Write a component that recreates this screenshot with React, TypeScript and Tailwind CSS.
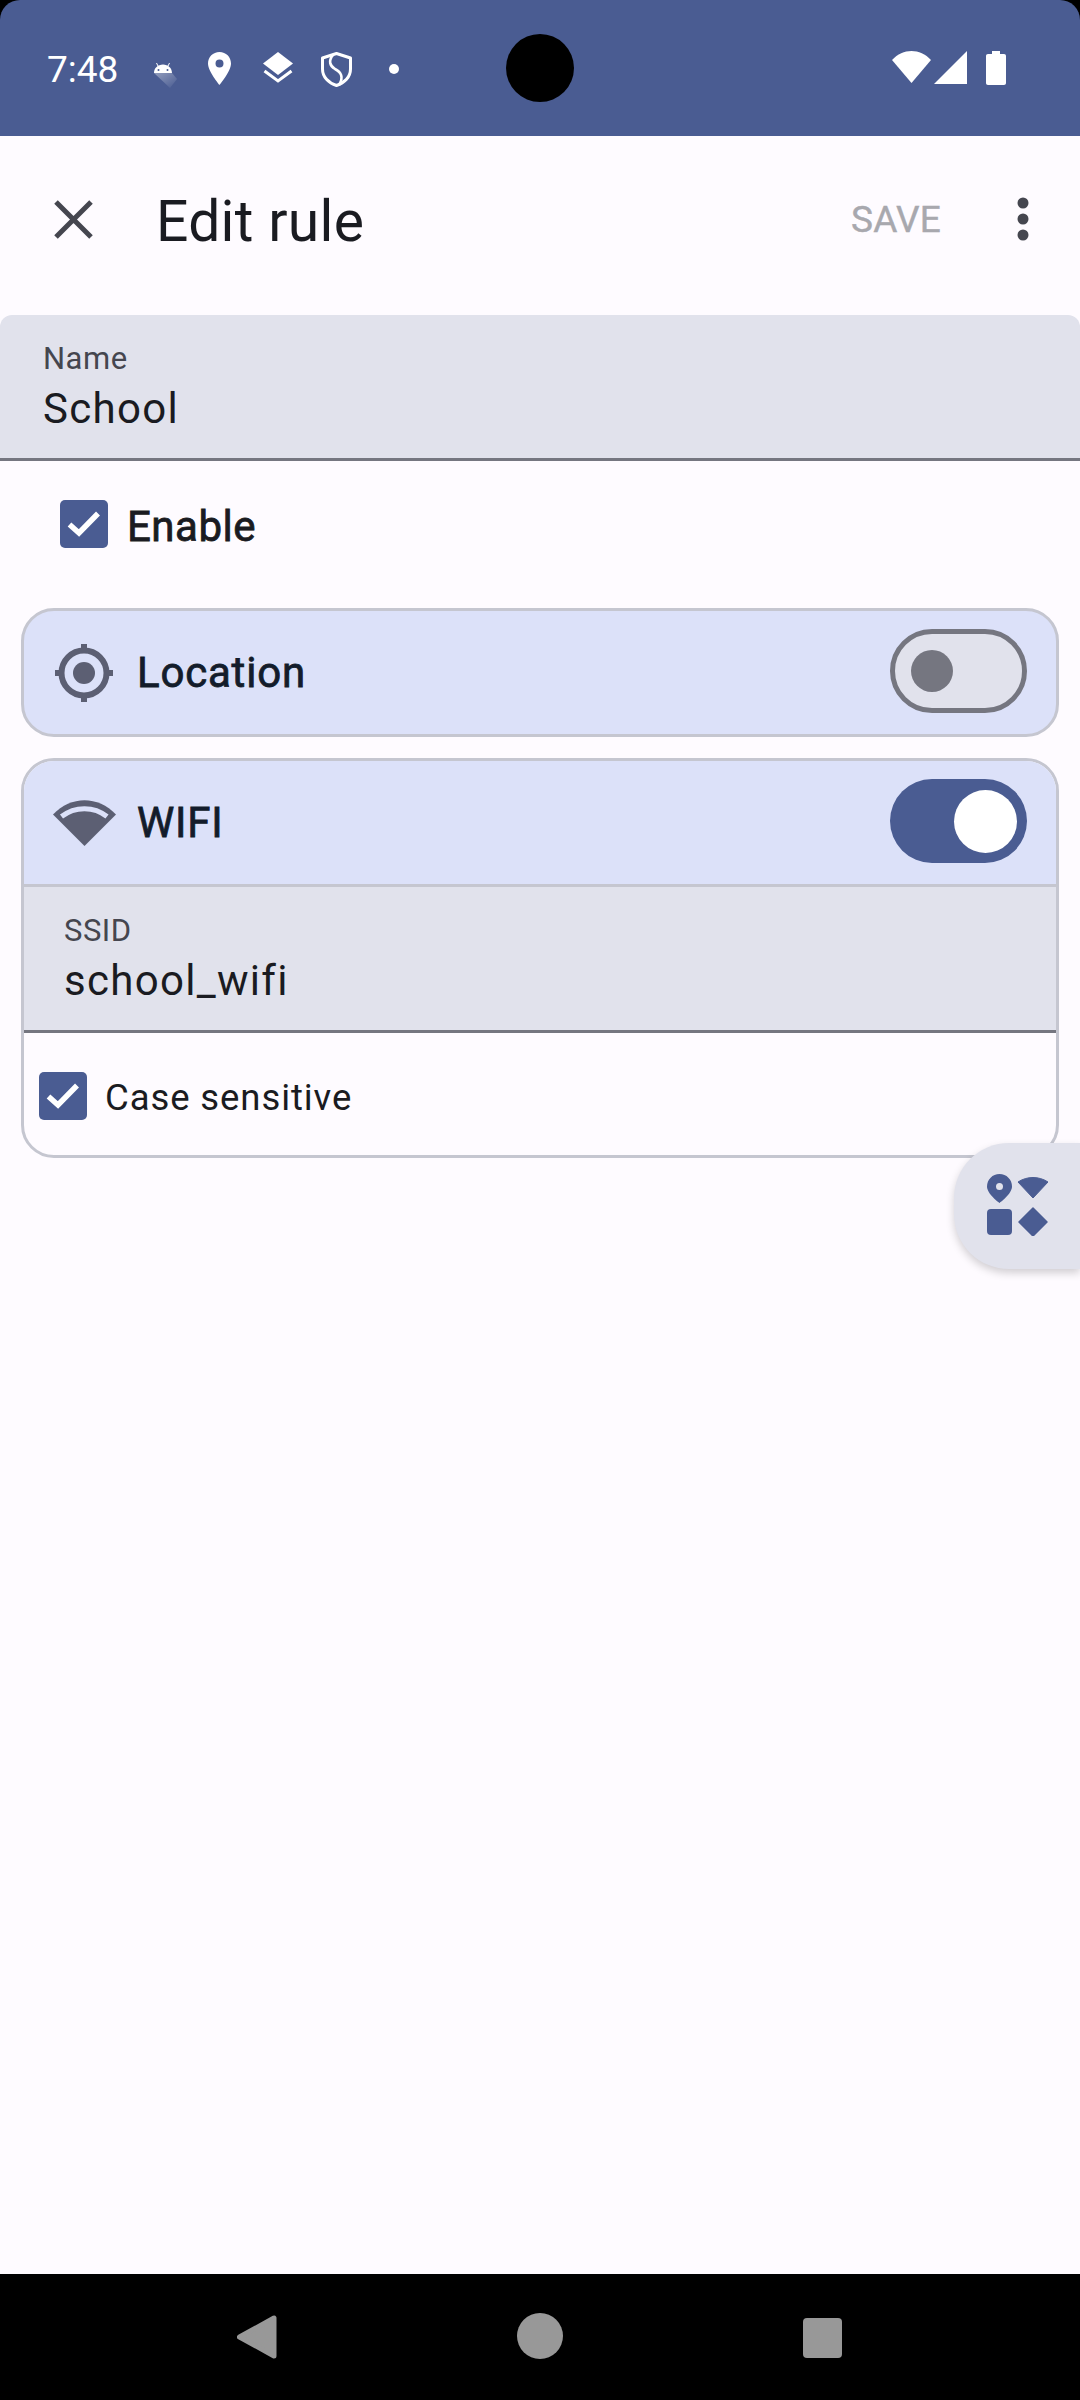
import React from "react";

const roboto = { fontFamily: "Roboto, 'Liberation Sans', sans-serif" };

function Check() {
  return (
    <span className="flex h-[48px] w-[48px] shrink-0 items-center justify-center rounded-[5px] bg-[#4a5c92]">
      <svg width="34" height="28" viewBox="0 0 34 28" fill="none">
        <path d="M2.5 14.5 L12 23 L31 3.5" stroke="#fff" strokeWidth="5.5" />
      </svg>
    </span>
  );
}

function Field({ label, value, px, h, top }: { label: string; value: string; px: string; h: string; top: string }) {
  return (
    <div className={`flex flex-col bg-[#e1e2ec] border-b-[3px] border-[#757680] ${px} ${h} ${top}`}>
      <div className="text-[31px] leading-[40px] tracking-[0.5px] text-[#45464f]">{label}</div>
      <div className="mt-[2px] text-[42px] leading-[56px] tracking-[1.3px] text-[#1a1b21]">{value}</div>
    </div>
  );
}

function Switch({ on }: { on: boolean }) {
  if (on) {
    return (
      <div className="flex h-[84px] w-[137px] items-center justify-end rounded-full bg-[#4a5c92] pr-[10px]">
        <div className="h-[63px] w-[63px] rounded-full bg-white" />
      </div>
    );
  }
  return (
    <div className="flex h-[84px] w-[137px] items-center rounded-full border-[5.5px] border-[#757680] bg-[#e1e2ec] pl-[16px]">
      <div className="h-[42px] w-[42px] rounded-full bg-[#757680]" />
    </div>
  );
}

export default function App() {
  return (
    <div className="relative flex h-[2400px] w-[1080px] flex-col overflow-hidden bg-black" style={roboto}>
      {/* status bar */}
      <div className="relative flex h-[136px] shrink-0 items-center rounded-t-[20px] bg-[#4a5c92] text-white">
        <span className="absolute left-[47px] top-[48px] text-[37px] leading-[44px]">7:48</span>
        <svg className="absolute left-[150px] top-[60px]" width="30" height="30" viewBox="0 0 30 30">
          <defs>
            <linearGradient id="fade" x1="0" y1="0" x2="1" y2="1">
              <stop offset="0" stopColor="#fff" stopOpacity="0.4" />
              <stop offset="1" stopColor="#fff" stopOpacity="0" />
            </linearGradient>
          </defs>
          <path d="M4 13 L22 13 L27 19 L20 28 Z" fill="url(#fade)" />
          <path fillRule="evenodd" d="M4 13 C4 8 8 4.5 13 4.5 C18 4.5 22 8 22 13 Z M8.5 9 A1 1 0 1 0 8.5 11 A1 1 0 1 0 8.5 9 Z M17.5 9 A1 1 0 1 0 17.5 11 A1 1 0 1 0 17.5 9 Z" fill="#fff" />
          <path d="M8 6 L6.5 3 M18 6 L19.5 3" stroke="#fff" strokeWidth="1" />
        </svg>
        <svg className="absolute left-[208px] top-[52px]" width="23" height="33" viewBox="0 0 23 33">
          <path fillRule="evenodd" d="M11.5 0 C5 0 0 5 0 11.5 C0 19.5 11.5 33 11.5 33 C11.5 33 23 19.5 23 11.5 C23 5 18 0 11.5 0 Z M11.5 7.5 A4 4 0 1 1 11.5 15.5 A4 4 0 1 1 11.5 7.5 Z" fill="#fff" />
        </svg>
        <svg className="absolute left-[263px] top-[52px]" width="30" height="31" viewBox="0 0 30 31">
          <path d="M15 0 L30 11.5 L15 23 L0 11.5 Z" fill="#fff" />
          <path d="M1.5 19 L15 29 L28.5 19" stroke="#fff" strokeWidth="3" fill="none" />
        </svg>
        <svg className="absolute left-[321px] top-[52px]" width="31" height="35" viewBox="0 0 31 35" fill="none">
          <path d="M15.5 1.5 L29.5 6 V17 C29.5 25 23.5 31 15.5 33.5 C7.5 31 1.5 25 1.5 17 V6 Z" stroke="#fff" strokeWidth="3" strokeLinejoin="round" />
          <path d="M12 3 C7 9 9 14 14 17 C20 20 23 25 18 33" stroke="#fff" strokeWidth="2.6" />
        </svg>
        <div className="absolute left-[389px] top-[64px] h-[10px] w-[10px] rounded-full bg-white" />
        <div className="absolute left-[506px] top-[34px] h-[68px] w-[68px] rounded-full bg-black" />
        <svg className="absolute left-[892px] top-[51px]" width="39" height="32" viewBox="0 0 39 32">
          <path d="M0 9 C11 -3 28 -3 39 9 L19.5 32 Z" fill="#fff" />
        </svg>
        <svg className="absolute left-[934px] top-[51px]" width="33" height="33" viewBox="0 0 33 33">
          <path d="M33 0 V33 H0 Z" fill="#fff" />
        </svg>
        <svg className="absolute left-[986px] top-[51px]" width="20" height="34" viewBox="0 0 20 34">
          <path d="M6 0 H14 V3 H18 C19.2 3 20 3.8 20 5 V32 C20 33.2 19.2 34 18 34 H2 C0.8 34 0 33.2 0 32 V5 C0 3.8 0.8 3 2 3 H6 Z" fill="#fff" />
        </svg>
      </div>

      {/* content */}
      <div className="flex flex-1 flex-col bg-[#fefbff]">
        {/* app bar */}
        <div className="flex h-[179px] shrink-0 items-center pb-[13px]">
          <svg className="ml-[52px]" width="43" height="43" viewBox="0 0 43 43">
            <path d="M4 4 L39 39 M39 4 L4 39" stroke="#45464f" strokeWidth="5" />
          </svg>
          <span className="ml-[61px] mt-[5px] text-[57px] leading-[66px] tracking-[0.3px] text-[#1a1b21]">Edit rule</span>
          <span className="ml-auto mt-[1px] text-[37px] leading-[44px] tracking-[0.2px] text-[#a8a8ae] [-webkit-text-stroke:0.4px_#a8a8ae]">SAVE</span>
          <svg className="ml-[76px] mr-[51px]" width="12" height="44" viewBox="0 0 12 44">
            <circle cx="6" cy="6" r="5.5" fill="#45464f" />
            <circle cx="6" cy="22" r="5.5" fill="#45464f" />
            <circle cx="6" cy="38" r="5.5" fill="#45464f" />
          </svg>
        </div>

        {/* name */}
        <div className="overflow-hidden rounded-t-[12px]">
          <Field label="Name" value="School" px="px-[43px]" h="h-[146px]" top="pt-[24px]" />
        </div>

        {/* enable */}
        <div className="mt-[39px] flex h-[48px] items-center pl-[60px]">
          <Check />
          <span className="ml-[19px] mt-[5px] text-[42px] leading-[48px] tracking-[0.5px] text-[#1a1b21] [-webkit-text-stroke:0.8px_#1a1b21]">Enable</span>
        </div>

        {/* location */}
        <div className="mx-[21px] mt-[60px] flex h-[129px] items-center rounded-[33px] border-[3px] border-[#c5c6d0] bg-[#dce1f9]">
          <svg className="ml-[30px]" width="60" height="60" viewBox="0 0 60 60" fill="none">
            <circle cx="30" cy="30" r="22.5" stroke="#5c5f73" strokeWidth="6" />
            <circle cx="30" cy="30" r="11" fill="#5c5f73" />
            <path d="M30 1 V9 M30 51 V59 M1 30 H9 M51 30 H59" stroke="#5c5f73" strokeWidth="6" />
          </svg>
          <span className="ml-[23px] text-[42px] leading-[48px] tracking-[0.8px] text-[#131c2b] [-webkit-text-stroke:0.8px_#131c2b]">Location</span>
          <div className="mb-[3px] ml-auto mr-[29px]">
            <Switch on={false} />
          </div>
        </div>

        {/* wifi */}
        <div className="mx-[21px] mt-[21px] flex flex-col overflow-hidden rounded-[33px] border-[3px] border-[#c5c6d0]">
          <div className="flex h-[126px] items-center border-b-[3px] border-[#c5c6d0] bg-[#dce1f9]">
            <svg className="ml-[29px]" width="63" height="46" viewBox="0 0 63 46">
              <path d="M0 14.5 C18 -4.5 45 -4.5 63 14.5 L31.5 46 Z" fill="#5c5f73" />
              <path d="M8.5 16.5 C22 6 41 6 54 16.5" stroke="#dce1f9" strokeWidth="5" fill="none" />
            </svg>
            <span className="ml-[21px] text-[42px] leading-[48px] tracking-[0.8px] text-[#131c2b] [-webkit-text-stroke:0.8px_#131c2b]">WIFI</span>
            <div className="mb-[3px] ml-auto mr-[29px]">
              <Switch on />
            </div>
          </div>
          <Field label="SSID" value="school_wifi" px="px-[40px]" h="h-[146px]" top="pt-[24px]" />
          <div className="flex h-[122px] items-center pt-[3px] pl-[15px]">
            <Check />
            <span className="ml-[18px] mt-[5px] text-[36.5px] leading-[44px] tracking-[0.9px] text-[#1a1b21]">Case sensitive</span>
          </div>
        </div>
      </div>

      {/* floating selector */}
      <div className="absolute left-[954px] top-[1143px] flex h-[126px] w-[126px] rounded-l-[55px] bg-[#e1e2ec] shadow-[0_4px_8px_rgba(0,0,0,0.18)]">
        <svg className="ml-[33px] mt-[31px]" width="61" height="62" viewBox="0 0 61 62">
          <path fillRule="evenodd" d="M12.5 0 C5.5 0 0 5.5 0 12.5 C0 20 12.5 29 12.5 29 C12.5 29 25 20 25 12.5 C25 5.5 19.5 0 12.5 0 Z M12.5 9 A3.5 3.5 0 1 1 12.5 16 A3.5 3.5 0 1 1 12.5 9 Z" fill="#4a5c92" />
          <path d="M31 8 C40 2 52 2 61 8 L46 24 Z" fill="#4a5c92" stroke="#4a5c92" strokeWidth="1" strokeLinejoin="round" />
          <rect x="0" y="35" width="25" height="26" rx="4" fill="#4a5c92" />
          <path d="M46 34 L60 48 L46 62 L32 48 Z" fill="#4a5c92" stroke="#4a5c92" strokeWidth="1.5" strokeLinejoin="round" />
        </svg>
      </div>

      {/* nav bar */}
      <div className="flex h-[126px] shrink-0 items-start bg-black">
        <svg className="ml-[237px] mt-[41px]" width="40" height="44" viewBox="0 0 40 44">
          <path d="M37 3 V41 L2.5 22 Z" fill="#989898" stroke="#989898" strokeWidth="5" strokeLinejoin="round" />
        </svg>
        <div className="ml-[240px] mt-[39px] h-[46px] w-[46px] rounded-full bg-[#989898]" />
        <div className="ml-[240px] mt-[44px] h-[40px] w-[39px] rounded-[4px] bg-[#989898]" />
      </div>
    </div>
  );
}
